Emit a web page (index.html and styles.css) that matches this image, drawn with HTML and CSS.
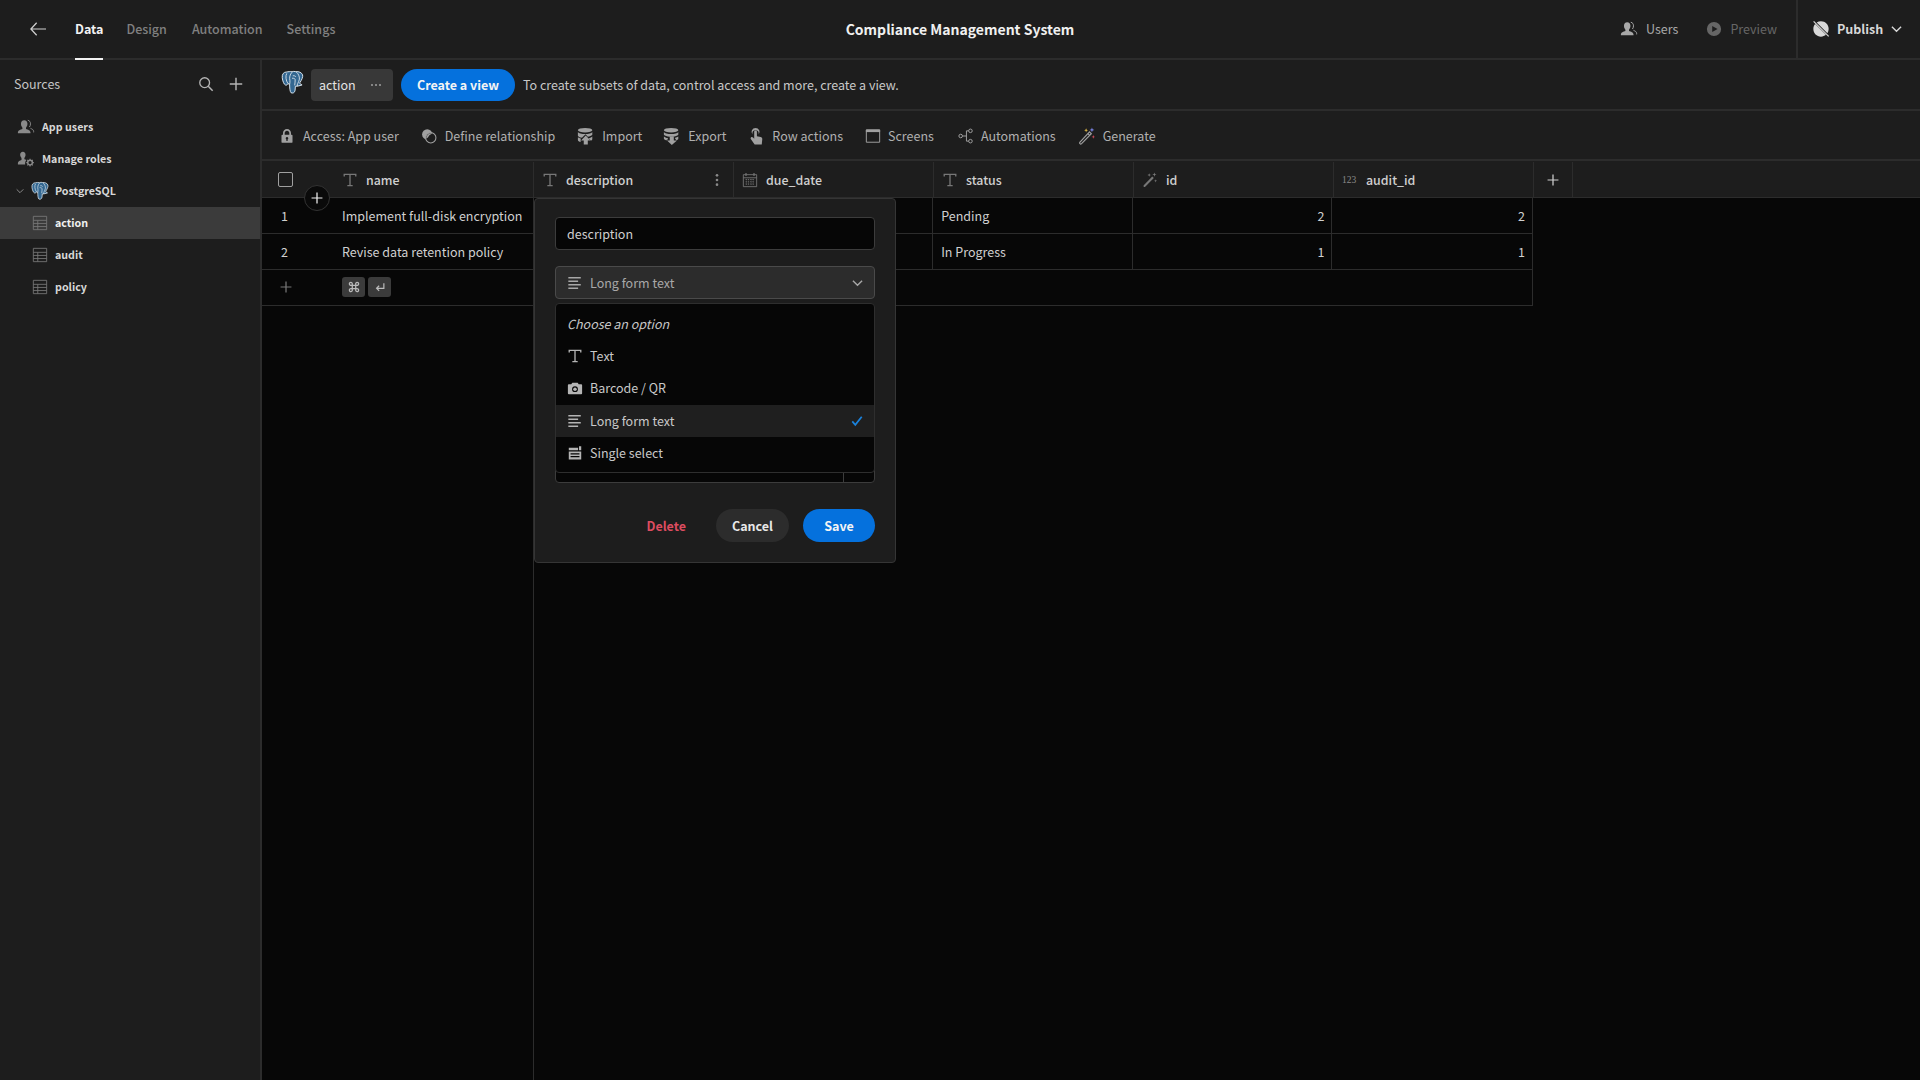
FILE: index.html
```html
<!DOCTYPE html>
<html lang="en">
<head>
<meta charset="utf-8">
<title>Compliance Management System</title>
<link rel="stylesheet" href="styles.css">
</head>
<body>
<svg class="sprite" xmlns="http://www.w3.org/2000/svg">
  <symbol id="i-t" viewBox="0 0 18 18"><path d="M2.500 5.200V2.600h13v2.600M9 2.600v12.800M6 15.400h6" fill="none" stroke="currentColor" stroke-width="1.500"/></symbol>
  <symbol id="i-table" viewBox="0 0 18 18"><path d="M1.500 1.500h15v15h-15zM1.500 6h15M1.500 9.500h15M1.500 13h15M6.500 6v10.500" fill="none" stroke="currentColor" stroke-width="1"/></symbol>
  <symbol id="i-user" viewBox="0 0 20 18"><path d="M8 1.500c2.300 0 3.600 1.800 3.600 4 0 1.800-.7 3.300-1.600 4.200v1.400c2 .7 5 1.500 5 3.900v1H1v-1c0-2.400 3-3.200 5-3.900V9.700C5.100 8.800 4.400 7.300 4.400 5.500c0-2.200 1.300-4 3.600-4z" fill="currentColor"/><path d="M12 1.500c2 .3 3 2 3 4 0 1.500-.5 2.700-1.200 3.500M15 10.500c1.500.6 3.500 1.500 3.500 3.500v1" fill="none" stroke="currentColor" stroke-width="1.100"/></symbol>
  <symbol id="i-roles" viewBox="0 0 20 18"><path d="M6.500 1c1.900 0 3 1.500 3 3.300 0 1.500-.6 2.700-1.300 3.500v1.400c.7.200 1.500.5 2.200.9-.9 1-1.400 2.300-1.400 3.700 0 .4 0 .8.100 1.200H1v-1.500c0-2 2.300-2.800 4-3.400V7.800C4.300 7 3.500 5.800 3.500 4.300 3.500 2.500 4.600 1 6.500 1z" fill="currentColor"/><circle cx="14.500" cy="13" r="2.600" fill="none" stroke="currentColor" stroke-width="1.600"/><path d="M14.500 8.800v1.600M14.500 15.600v1.600M10.300 13h1.600M17.100 13h1.600M11.500 10l1.100 1.100M16.400 14.900l1.100 1.100M17.500 10l-1.100 1.100M12.600 14.900L11.500 16" stroke="currentColor" stroke-width="1.200"/></symbol>
  <symbol id="i-pg" viewBox="0 0 24 25"><path d="M6 1.500C2.500 1.500 1 4 1.300 7.500c.4 3.500 1.700 7 3.500 7.700 1.200.4 2-.7 2.500-1.500L9 14.500c0 3.500.3 7.500 1.500 8.700 1.500.8 4 .1 4.200-2.700l.3-4c2.500-.3 5-.5 7-1.500-1.500-.5-2.500-1-2.200-2.500 1.700-2.500 3.400-6 2.700-8-1-2.500-4-3.700-7-3.300-1.500-.4-3-.4-4 .1C9.500.8 7.500 1.300 6 1.500z" fill="#336791" stroke="#dfe8ef" stroke-width="1"/><path d="M6 3C4.500 5.500 5 10.500 7.300 13.700M11.500 1.800C9.300 4 8.500 7.500 9.300 10.500c.3 1.300-.2 2.800-.3 4M16 1.700c2 1.500 3.500 4.500 3.200 7.300-.2 1.500-1 3-1.700 4.500-.5 1-.7 2-.5 3M12.300 5.500c1.500-.3 2.800.2 3.200 1.200M11.500 8c2 0 3 .3 3.300 1.500.3 1.500-.5 3.500-.5 6" fill="none" stroke="#dfe8ef" stroke-width=".9"/></symbol>
  <symbol id="i-lock" viewBox="0 0 18 18"><path d="M9 1.200c-2.600 0-4.500 1.900-4.500 4.500V7.500H3.800c-.6 0-1 .4-1 1v7.200c0 .6.400 1 1 1h10.400c.6 0 1-.4 1-1V8.500c0-.6-.4-1-1-1h-.7V5.700C13.500 3.100 11.600 1.200 9 1.200zM6.400 7.500V5.700C6.400 4.100 7.400 3 9 3s2.600 1.100 2.600 2.700v1.800zM9 10.200a1.500 1.500 0 0 1 .7 2.800v1.500H8.300V13A1.500 1.500 0 0 1 9 10.200z" fill="currentColor" fill-rule="evenodd"/></symbol>
  <symbol id="i-rel" viewBox="0 0 18 18"><circle cx="7" cy="7.200" r="5.800" fill="currentColor"/><circle cx="11" cy="11" r="5.800" fill="#1d1d1d" stroke="currentColor" stroke-width="1.200"/><path d="M5.800 11.800a5.800 5.800 0 0 1 6.900-5.700l-3 1.800-2.200 3z" fill="currentColor"/></symbol>
  <symbol id="i-import" viewBox="0 0 20 20"><ellipse cx="9" cy="3.500" rx="8" ry="2.500" fill="currentColor"/><path d="M1 5.500c1 1.600 4 2.300 8 2.300s7-.7 8-2.300v3c-1 1.200-3 2-5 2.200L9.500 8l-4 4c-2-.3-3.700-1-4.500-2zM1 11.500c.8.700 2 1.100 3.200 1.400l-.2 3.900c-1.700-.4-3-1.100-3-2.300z" fill="currentColor"/><path d="M9.700 9.500L15 15h-3v4.500H7.500V15h-3z" fill="currentColor"/><path d="M17 10.500v3c0 .6-.5 1.200-1.500 1.700l-2.500-2.700c1.800-.4 3.200-1.100 4-2z" fill="currentColor"/></symbol>
  <symbol id="i-export" viewBox="0 0 20 20"><ellipse cx="9" cy="3.500" rx="8" ry="2.500" fill="currentColor"/><path d="M1 5.500c1 1.600 4 2.300 8 2.300s7-.7 8-2.300v3c-1.200 1.300-3.500 2-6 2.200H7.500C4.500 10.500 2 9.800 1 8.500zM1 10.500c1 1 2.500 1.600 4.500 1.900V14H4l.8.800C2.800 14.600 1 14 1 13z" fill="currentColor"/><path d="M7.500 10.500H12v4.500h3.500L9.800 20 4.500 15h3z" fill="currentColor"/><path d="M17 10.500V13c0 .7-.8 1.300-2 1.700L13.500 13v-1c1.500-.3 2.700-.8 3.500-1.500z" fill="currentColor"/></symbol>
  <symbol id="i-hand" viewBox="0 0 18 20"><path d="M8.500 1a4.500 4.500 0 0 1 3.500 7.300V7a3.500 3.500 0 1 0-7 0v1.300A4.500 4.500 0 0 1 8.500 1z" fill="currentColor"/><path d="M7 5.300c0-.9.600-1.500 1.500-1.500S10 4.400 10 5.300v5l4.200.9c1.100.3 1.800 1 1.800 2.200l-.6 6.100H7.500L3.400 13.500c-.6-.9-.4-1.700.2-2.200.7-.5 1.500-.3 2.100.3L7 13z" fill="currentColor"/></symbol>
  <symbol id="i-screen" viewBox="0 0 18 18"><path d="M1.500 2h15v14h-15z" fill="none" stroke="currentColor" stroke-width="1.100"/><path d="M1 2h16v2.600H1z" fill="currentColor"/></symbol>
  <symbol id="i-auto" viewBox="0 0 18 18"><g fill="none" stroke="currentColor" stroke-width="1.100"><circle cx="3" cy="9" r="2"/><circle cx="14" cy="3.200" r="2"/><circle cx="14" cy="14.800" r="2"/><path d="M5 9h4.500M12 3.200H9.500v11.600H12"/></g></symbol>
  <symbol id="i-wand" viewBox="0 0 20 20"><path d="M12.800 5.500l2 2L4 18.500c-.6.500-1.300.5-1.800 0-.5-.5-.5-1.200 0-1.800z" fill="none" stroke="currentColor" stroke-width="1.300"/><path d="M11 7.300l2 2" stroke="currentColor" stroke-width="1.300"/><path d="M15.500 .5l.7 2 2 .7-2 .7-.7 2-.7-2-2-.7 2-.7z" fill="#7b86e8"/><path d="M9 1.500l.6 1.600 1.600.6-1.600.6L9 6l-.6-1.700-1.600-.6 1.600-.6z" fill="#e8bf4a"/><path d="M17 9l.5 1.500 1.500.5-1.500.5-.5 1.500-.5-1.500L15 11l1.500-.5z" fill="#e05060"/></symbol>
  <symbol id="i-wand-mono" viewBox="0 0 20 20"><path d="M12.800 5.500l2 2L4 18.500c-.6.500-1.300.5-1.800 0-.5-.5-.5-1.200 0-1.800z" fill="currentColor"/><path d="M15.500 .5l.7 2 2 .7-2 .7-.7 2-.7-2-2-.7 2-.7zM9 1.500l.6 1.600 1.600.6-1.600.6L9 6l-.6-1.700-1.600-.6 1.600-.6zM17 9l.5 1.500 1.500.5-1.500.5-.5 1.500-.5-1.500L15 11l1.500-.5z" fill="currentColor"/></symbol>
  <symbol id="i-cal" viewBox="0 0 18 18"><path d="M1.500 3h15v13.500h-15zM1.500 6.500h15" fill="none" stroke="currentColor" stroke-width="1"/><path d="M4.500 1v3.500M13.500 1v3.500" stroke="currentColor" stroke-width="1.300"/><path d="M4 8.500h10M4 11h10M4 13.500h10M5 8v6.500M7.500 8v6.500M10.500 8v6.500M13 8v6.500" stroke="currentColor" stroke-width=".8" stroke-dasharray="1.300 1.200"/></symbol>
  <symbol id="i-lines" viewBox="0 0 18 18"><path d="M1.500 3h14M1.500 7h11M1.500 11h14M1.500 15h11" stroke="currentColor" stroke-width="1.700"/></symbol>
  <symbol id="i-camera" viewBox="0 0 18 18"><path d="M6 3h6l1.200 1.800H16c.6 0 1 .4 1 1V15c0 .6-.4 1-1 1H2c-.6 0-1-.4-1-1V5.800c0-.6.400-1 1-1h2.800zM9 7a3.300 3.300 0 1 0 0 6.600A3.300 3.300 0 0 0 9 7z" fill="currentColor" fill-rule="evenodd"/><circle cx="9" cy="10.300" r="2" fill="currentColor"/></symbol>
  <symbol id="i-select" viewBox="0 0 18 18"><path d="M2 3h10.500v3H2zM13.500 1.500H16v4.500h-2.500zM2 7.300h14v9H2z" fill="currentColor"/><path d="M4 10h10M4 13h10" stroke="#050505" stroke-width="1.300"/></symbol>
  <symbol id="i-search" viewBox="0 0 18 18"><circle cx="7.500" cy="7.500" r="5.500" fill="none" stroke="currentColor" stroke-width="1.500"/><path d="M11.500 11.500l5 5" stroke="currentColor" stroke-width="1.700"/></symbol>
  <symbol id="i-plus" viewBox="0 0 18 18"><path d="M9 2v14M2 9h14" stroke="currentColor" stroke-width="1.600"/></symbol>
  <symbol id="i-chev" viewBox="0 0 12 8"><path d="M1 1.500l5 5 5-5" fill="none" stroke="currentColor" stroke-width="1.500"/></symbol>
  <symbol id="i-back" viewBox="0 0 20 18"><path d="M8.500 2L2 9l6.500 7M2 9h17" fill="none" stroke="currentColor" stroke-width="1.400"/></symbol>
  <symbol id="i-play" viewBox="0 0 18 18"><path d="M9 1a8 8 0 1 0 0 16A8 8 0 0 0 9 1zM7 5.500l6 3.500-6 3.500z" fill="currentColor" fill-rule="evenodd"/></symbol>
  <symbol id="i-globe" viewBox="0 0 20 20"><path d="M10 1.500c4.800 0 8.500 3.700 8.500 8.500 0 1.800-.5 3.400-1.400 4.800L5.200 2.900C6.600 2 8.200 1.500 10 1.500zM3.500 4.500l12 12c-1.500 1.300-3.400 2-5.500 2-4.800 0-8.500-3.700-8.500-8.500 0-2.100.7-4 2-5.500z" fill="currentColor"/><path d="M1.800 1.500l16.700 16.700" stroke="currentColor" stroke-width="1.300"/></symbol>
  <symbol id="i-check" viewBox="0 0 14 14"><path d="M1.500 7.500l3.500 4 7.500-9.500" fill="none" stroke="currentColor" stroke-width="2"/></symbol>
  <symbol id="i-dots-v" viewBox="0 0 6 18"><circle cx="3" cy="3" r="1.700" fill="currentColor"/><circle cx="3" cy="9" r="1.700" fill="currentColor"/><circle cx="3" cy="15" r="1.700" fill="currentColor"/></symbol>
  <symbol id="i-dots-h" viewBox="0 0 12 4"><circle cx="2" cy="2" r="1.100" fill="currentColor"/><circle cx="6" cy="2" r="1.100" fill="currentColor"/><circle cx="10" cy="2" r="1.100" fill="currentColor"/></symbol>
  <symbol id="i-cmd" viewBox="0 0 14 14"><path d="M5 5h4v4H5zM5 5H3.500A1.700 1.700 0 1 1 5 3.500zM9 5V3.500A1.700 1.700 0 1 1 10.500 5zM9 9h1.500A1.700 1.700 0 1 1 9 10.500zM5 9v1.500A1.700 1.700 0 1 1 3.500 9z" fill="none" stroke="currentColor" stroke-width="1.500"/></symbol>
  <symbol id="i-enter" viewBox="0 0 14 14"><path d="M11.500 2.500v6H3M6 5.500L3 8.500l3 3" fill="none" stroke="currentColor" stroke-width="1.400"/></symbol>
</svg>

<div class="app">
  <header class="topbar">
    <nav class="topnav">
      <svg class="ic back"><use href="#i-back"/></svg>
      <a class="tab active">Data</a>
      <a class="tab tab-design">Design</a>
      <a class="tab">Automation</a>
      <a class="tab">Settings</a>
    </nav>
    <h1 class="title">Compliance Management System</h1>
    <div class="topactions">
      <span class="topaction"><svg class="ic ic-18"><use href="#i-user"/></svg>Users</span>
      <span class="topaction disabled"><svg class="ic ic-16"><use href="#i-play"/></svg>Preview</span>
      <span class="publish"><svg class="ic ic-18"><use href="#i-globe"/></svg><b>Publish</b><svg class="ic chev-sm"><use href="#i-chev"/></svg></span>
    </div>
  </header>

  <div class="main">
    <aside class="sidebar">
      <div class="sources-head">
        <span class="sources-title">Sources</span>
        <svg class="ic ic-16 head-search"><use href="#i-search"/></svg>
        <svg class="ic ic-16 head-plus"><use href="#i-plus"/></svg>
      </div>
      <ul class="tree">
        <li class="node"><svg class="ic ic-18 node-ic"><use href="#i-user"/></svg>App users</li>
        <li class="node"><svg class="ic ic-18 node-ic"><use href="#i-roles"/></svg>Manage roles</li>
        <li class="node node-db"><svg class="ic tree-chev"><use href="#i-chev"/></svg><svg class="ic pg-sm"><use href="#i-pg"/></svg>PostgreSQL</li>
        <li class="node node-tbl selected"><svg class="ic ic-16 tbl-ic"><use href="#i-table"/></svg>action</li>
        <li class="node node-tbl"><svg class="ic ic-16 tbl-ic"><use href="#i-table"/></svg>audit</li>
        <li class="node node-tbl"><svg class="ic ic-16 tbl-ic"><use href="#i-table"/></svg>policy</li>
      </ul>
    </aside>

    <section class="content">
      <div class="viewbar">
        <svg class="ic pg-lg"><use href="#i-pg"/></svg>
        <div class="pill"><span>action</span><svg class="ic pill-dots"><use href="#i-dots-h"/></svg></div>
        <button class="btn btn-primary create">Create a view</button>
        <span class="hint">To create subsets of data, control access and more, create a view.</span>
      </div>

      <div class="toolbar">
        <span class="tool wide"><svg class="ic ic-16"><use href="#i-lock"/></svg>Access: App user</span>
        <span class="tool wide"><svg class="ic ic-16"><use href="#i-rel"/></svg>Define relationship</span>
        <span class="tool"><svg class="ic ic-18"><use href="#i-import"/></svg>Import</span>
        <span class="tool tight"><svg class="ic ic-18"><use href="#i-export"/></svg>Export</span>
        <span class="tool tight"><svg class="ic ic-18"><use href="#i-hand"/></svg>Row actions</span>
        <span class="tool"><svg class="ic ic-16"><use href="#i-screen"/></svg>Screens</span>
        <span class="tool loose"><svg class="ic ic-16"><use href="#i-auto"/></svg>Automations</span>
        <span class="tool"><svg class="ic ic-18"><use href="#i-wand"/></svg>Generate</span>
      </div>

      <div class="grid">
        <div class="grid-head">
          <div class="gutter-head"><span class="checkbox"></span></div>
          <div class="hcell name-col"><svg class="ic ic-16 hic"><use href="#i-t"/></svg>name</div>
          <div class="hcell"><svg class="ic ic-16 hic"><use href="#i-t"/></svg>description<svg class="ic hdots"><use href="#i-dots-v"/></svg></div>
          <div class="hcell"><svg class="ic ic-16 hic"><use href="#i-cal"/></svg>due_date</div>
          <div class="hcell"><svg class="ic ic-16 hic"><use href="#i-t"/></svg>status</div>
          <div class="hcell"><svg class="ic ic-16 hic"><use href="#i-wand-mono"/></svg>id</div>
          <div class="hcell"><span class="num-ic">123</span>audit_id</div>
          <div class="hadd"><svg class="ic ic-14"><use href="#i-plus"/></svg></div>
        </div>
        <div class="grid-body">
          <div class="sticky">
            <div class="srow"><span class="rownum">1</span><span class="cell name-cell">Implement full-disk encryption</span></div>
            <div class="srow"><span class="rownum">2</span><span class="cell name-cell">Revise data retention policy</span></div>
            <div class="srow srow-add"><span class="rownum add"><svg class="ic ic-14"><use href="#i-plus"/></svg></span>
              <span class="keys"><span class="key"><svg class="ic ic-12"><use href="#i-cmd"/></svg></span><span class="key"><svg class="ic ic-12"><use href="#i-enter"/></svg></span></span>
            </div>
          </div>
          <div class="scroll">
            <div class="drow">
              <span class="cell"></span><span class="cell"></span><span class="cell">Pending</span><span class="cell right">2</span><span class="cell right">2</span>
            </div>
            <div class="drow">
              <span class="cell"></span><span class="cell"></span><span class="cell">In Progress</span><span class="cell right">1</span><span class="cell right">1</span>
            </div>
            <div class="drow blank"></div>
          </div>

          <span class="float-add"><svg class="ic ic-14"><use href="#i-plus"/></svg></span>

          <div class="popover">
            <div class="field">description</div>
            <div class="field field-select">
              <svg class="ic ic-16"><use href="#i-lines"/></svg><span class="grow">Long form text</span><svg class="ic chev-sm"><use href="#i-chev"/></svg>
            </div>
            <div class="field-hidden"><span class="stepper"></span></div>
            <div class="actions">
              <span class="delete">Delete</span>
              <button class="btn btn-secondary">Cancel</button>
              <button class="btn btn-primary save">Save</button>
            </div>
            <ul class="menu">
              <li class="menu-label">Choose an option</li>
              <li class="opt"><svg class="ic ic-16"><use href="#i-t"/></svg>Text</li>
              <li class="opt"><svg class="ic ic-16"><use href="#i-camera"/></svg>Barcode / QR</li>
              <li class="opt opt-on"><svg class="ic ic-16"><use href="#i-lines"/></svg><span class="grow">Long form text</span><svg class="ic check"><use href="#i-check"/></svg></li>
              <li class="opt"><svg class="ic ic-16"><use href="#i-select"/></svg>Single select</li>
            </ul>
          </div>
        </div>
      </div>
    </section>
  </div>
</div>
</body>
</html>
```

FILE: styles.css
```css
* { box-sizing: border-box; }
html, body { margin: 0; height: 100%; overflow: hidden; }
body {
  background: #1d1d1d;
  color: #d6d6d6;
  font: 400 12.500px/20px "Noto Sans CJK SC", "Noto Sans CJK JP", "Open Sans", sans-serif;
}
.sprite { display: none; }
.ic { display: block; flex: none; color: inherit; }
.ic-12 { width: 12px; height: 12px; }
.ic-14 { width: 14px; height: 14px; }
.ic-16 { width: 16px; height: 16px; }
.ic-18 { width: 18px; height: 18px; }
.grow { flex: 1; }
ul { list-style: none; margin: 0; padding: 0; }

.app { height: 100vh; display: flex; flex-direction: column; }

.topbar {
  height: 60px;
  flex: none;
  display: grid;
  grid-template-columns: 1fr auto 1fr;
  align-items: stretch;
  border-bottom: 2px solid #2c2c2c;
}
.topnav { display: flex; align-items: stretch; padding-left: 29px; }
.back { width: 18px; height: 16px; align-self: center; color: #cfcfcf; margin-right: 28px; }
.tab {
  display: flex;
  align-items: center;
  margin-right: 24px;
  font-weight: 500;
  font-size: 12.500px;
  color: #808080;
  margin-bottom: -2px;
  border-bottom: 2px solid transparent;
}
.tab.active { color: #f2f2f2; font-weight: 600; border-bottom-color: #f2f2f2; margin-right: 23px; }
.tab-design { margin-right: 25px; }
.title { margin: 0; align-self: center; font-size: 14px; font-weight: 600; line-height: 20px; color: #f0f0f0; }
.topactions { display: flex; justify-content: flex-end; align-items: stretch; }
.topaction { display: flex; align-items: center; gap: 8px; margin-right: 28px; color: #a8a8a8; font-size: 12.500px; }
.topaction.disabled { color: #666; margin-right: 19px; }
.publish {
  display: flex;
  align-items: center;
  gap: 7px;
  width: 124px;
  padding-left: 14px;
  border-left: 2px solid #2c2c2c;
  color: #d8d8d8;
}
.publish b { font-weight: 600; font-size: 12.500px; flex: 1; }
.publish .chev-sm { margin-right: 18px; }
.chev-sm { width: 11px; height: 8px; }

.main { flex: 1; min-height: 0; display: flex; }

.sidebar { width: 262px; flex: none; border-right: 2px solid #2c2c2c; }
.sources-head { height: 51px; display: flex; align-items: center; padding: 0 16px 3px 14px; }
.sources-title { flex: 1; font-size: 12.500px; color: #c4c4c4; }
.head-search { color: #b4b4b4; margin-right: 14px; }
.head-plus { color: #b4b4b4; }
.node {
  height: 32px;
  display: flex;
  align-items: center;
  padding-left: 17px;
  font-size: 10.700px;
  font-weight: 600;
  color: #d8d8d8;
}
.node-ic { color: #8a8a8a; margin-right: 7px; }
.node-db { padding-left: 16px; }
.tree-chev { width: 8px; height: 6px; color: #8a8a8a; margin-right: 7px; }
.pg-sm { width: 18px; height: 20px; margin-right: 6px; }
.node-tbl { padding-left: 32px; }
.tbl-ic { color: #777; margin-right: 7px; }
.selected { background: #3b3b3b; color: #f0f0f0; }

.content { flex: 1; min-width: 0; display: flex; flex-direction: column; }

.viewbar {
  height: 51px;
  flex: none;
  display: flex;
  align-items: center;
  padding-left: 19px;
  border-bottom: 2px solid #2c2c2c;
}
.pg-lg { width: 23px; height: 25px; margin-right: 7px; margin-top: -4px; }
.pill {
  width: 82px;
  height: 32px;
  display: flex;
  align-items: center;
  justify-content: space-between;
  padding: 0 11px 0 8px;
  background: #383838;
  border-radius: 4px;
  color: #e4e4e4;
  margin-right: 8px;
  font-size: 12.500px;
}
.pill-dots { width: 12px; height: 4px; color: #999; }
.btn {
  border: 0;
  height: 33px;
  border-radius: 17px;
  font: 600 12.500px/20px "Noto Sans CJK SC", "Noto Sans CJK JP", sans-serif;
  padding: 0;
  color: #f4f4f4;
}
.btn-primary { background: #0571dd; }
.btn-secondary { background: #2c2c2c; width: 73px; margin-right: 14px; color: #e8e8e8; }
.create { width: 114px; height: 32px; margin-right: 8px; }
.save { width: 72px; }
.hint { font-size: 12.500px; color: #c8c8c8; }

.toolbar {
  height: 50px;
  flex: none;
  display: flex;
  align-items: center;
  padding: 1px 0 0 17px;
  gap: 22px;
  border-bottom: 2px solid #2c2c2c;
}
.tool { display: flex; align-items: center; gap: 7px; color: #b0b0b0; font-size: 12.500px; }
.tool .ic { color: #a0a0a0; }
.tool.wide { gap: 8px; }
.tool.tight { margin-left: -1px; }
.tool.loose { margin-left: 2px; }

.grid { flex: 1; min-height: 0; display: flex; flex-direction: column; }
.grid-head { height: 37px; flex: none; display: flex; padding-top: 1px; border-bottom: 1px solid #2c2c2c; }
.gutter-head { width: 72px; flex: none; padding-left: 16px; display: flex; align-items: center; }
.checkbox { width: 15px; height: 15px; border: 1.500px solid #a0a0a0; border-radius: 2px; }
.hcell {
  width: 200px;
  flex: none;
  display: flex;
  align-items: center;
  padding-left: 8px;
  gap: 8px;
  border-right: 1px solid #2c2c2c;
  color: #d0d0d0;
  font-size: 12.400px;
  font-weight: 500;
}
.hic { color: #777; }
.num-ic { width: 16px; font: 400 9.500px/12px "Liberation Serif", serif; color: #8a8a8a; }
.hdots { width: 6px; height: 14px; margin-left: auto; margin-right: 13px; color: #8a8a8a; }
.hadd { width: 39px; display: flex; align-items: center; justify-content: center; border-right: 1px solid #2c2c2c; color: #cfcfcf; }

.grid-body { flex: 1; min-height: 0; display: flex; position: relative; background: #070707; }
.sticky { width: 272px; flex: none; border-right: 1px solid #2c2c2c; }
.srow { height: 36px; display: flex; align-items: center; border-bottom: 1px solid #2c2c2c; }
.srow-add { padding-bottom: 1px; }
.rownum { width: 72px; flex: none; padding-left: 19px; color: #d0d0d0; font-size: 12.500px; }
.rownum.add { color: #777; padding-left: 17px; }
.name-cell { flex: 1; }
.cell { font-size: 12.500px; color: #d0d0d0; white-space: nowrap; padding: 0 8px; }
.keys { display: flex; gap: 3px; padding-left: 8px; }
.key {
  width: 23px;
  height: 20px;
  display: flex;
  align-items: center;
  justify-content: center;
  background: #3b3b3b;
  border-radius: 3px;
  color: #bbb;
}
.scroll { flex: none; width: 999px; }
.drow { height: 36px; display: flex; border-bottom: 1px solid #2c2c2c; border-right: 1px solid #2c2c2c; }
.drow .cell { width: 200px; display: flex; align-items: center; border-right: 1px solid #2c2c2c; }
.drow .cell:last-child { border-right: 0; }
.cell.right { justify-content: flex-end; padding-right: 7px; }

.float-add {
  position: absolute;
  left: 42px;
  top: -13px;
  width: 26px;
  height: 26px;
  display: flex;
  align-items: center;
  justify-content: center;
  background: #0a0a0a;
  border: 1px solid #333;
  border-radius: 50%;
  color: #f0f0f0;
}

.popover {
  position: absolute;
  left: 272px;
  top: 0;
  width: 362px;
  height: 365px;
  padding: 18px 20px;
  display: flex;
  flex-direction: column;
  background: #1d1d1d;
  border: 1px solid #353535;
  border-radius: 4px;
}
.field {
  height: 33px;
  flex: none;
  display: flex;
  align-items: center;
  padding: 0 11px;
  background: #060606;
  border: 1px solid #3c3c3c;
  border-radius: 4px;
  color: #cfcfcf;
  font-size: 12.500px;
  margin-bottom: 16px;
}
.field-select { background: #2c2c2c; border-color: #4a4a4a; color: #a8a8a8; gap: 7px; margin-bottom: 6px; }
.field-hidden {
  height: 178px;
  flex: none;
  display: flex;
  justify-content: flex-end;
  background: #060606;
  border: 1px solid #3c3c3c;
  border-radius: 4px;
}
.stepper { width: 31px; border-left: 1px solid #3c3c3c; }
.actions { display: flex; align-items: center; justify-content: flex-end; margin-top: 26px; }
.delete { margin-right: 30px; color: #dd4c60; font-weight: 600; font-size: 12.500px; }

.menu {
  position: absolute;
  left: 20px;
  top: 104px;
  width: 320px;
  height: 170px;
  padding-top: 4px;
  background: #060606;
  border: 1px solid #2e2e2e;
  border-radius: 4px;
  font-size: 12.500px;
  color: #c8c8c8;
}
.menu-label { height: 32px; display: flex; align-items: center; padding-left: 11px; font-style: italic; }
.opt { height: 32px; display: flex; align-items: center; gap: 7px; padding: 0 11px; }
.opt .ic-16 { color: #b4b4b4; }
.opt-on { background: #1f1f1f; margin-top: 1px; }
.check { width: 12px; height: 12px; color: #1a82dc; }
```
